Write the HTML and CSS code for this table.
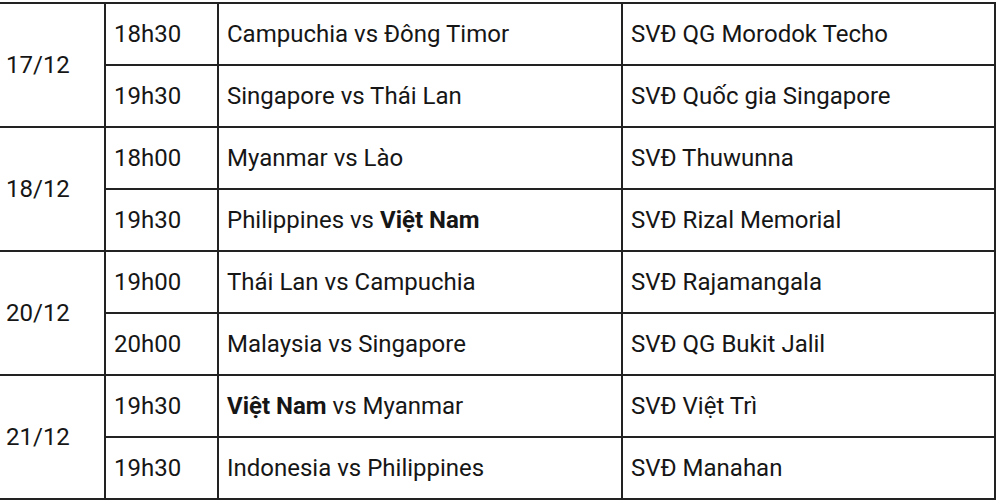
FILE: index.html
```html
<!DOCTYPE html>
<html lang="vi">
<head>
<meta charset="utf-8">
<title>Lịch thi đấu</title>
<link rel="stylesheet" href="styles.css">
</head>
<body>
<div class="schedule">
  <div class="cell date span2"><span>17/12</span></div>
  <div class="cell"><span>18h30</span></div>
  <div class="cell"><span>Campuchia vs Đông Timor</span></div>
  <div class="cell"><span>SVĐ QG Morodok Techo</span></div>
  <div class="cell"><span>19h30</span></div>
  <div class="cell"><span>Singapore vs Thái Lan</span></div>
  <div class="cell"><span>SVĐ Quốc gia Singapore</span></div>

  <div class="cell date span2"><span>18/12</span></div>
  <div class="cell"><span>18h00</span></div>
  <div class="cell"><span>Myanmar vs Lào</span></div>
  <div class="cell"><span>SVĐ Thuwunna</span></div>
  <div class="cell"><span>19h30</span></div>
  <div class="cell"><span>Philippines vs <b>Việt Nam</b></span></div>
  <div class="cell"><span>SVĐ Rizal Memorial</span></div>

  <div class="cell date span2"><span>20/12</span></div>
  <div class="cell"><span>19h00</span></div>
  <div class="cell"><span>Thái Lan vs Campuchia</span></div>
  <div class="cell"><span>SVĐ Rajamangala</span></div>
  <div class="cell"><span>20h00</span></div>
  <div class="cell"><span>Malaysia vs Singapore</span></div>
  <div class="cell"><span>SVĐ QG Bukit Jalil</span></div>

  <div class="cell date span2"><span>21/12</span></div>
  <div class="cell"><span>19h30</span></div>
  <div class="cell"><span><b>Việt Nam</b> vs Myanmar</span></div>
  <div class="cell"><span>SVĐ Việt Trì</span></div>
  <div class="cell"><span>19h30</span></div>
  <div class="cell"><span>Indonesia vs Philippines</span></div>
  <div class="cell"><span>SVĐ Manahan</span></div>
</div>
</body>
</html>
```

FILE: styles.css
```css
html, body {
  margin: 0;
  padding: 0;
  background: #ffffff;
}
body {
  overflow: hidden;
  font-family: Roboto, "Liberation Sans", sans-serif;
  font-size: 24px;
  color: #161616;
}
.schedule {
  display: grid;
  grid-template-columns: 106px 111px 402px 371px;
  grid-auto-rows: 60px;
  gap: 2px;
  padding: 2px;
  background: #222222;
  width: max-content;
  margin: 2px 0 0 -4px;
}
.cell {
  background: #ffffff;
  display: flex;
  align-items: center;
  padding: 0 8px;
  white-space: nowrap;
}
.cell b {
  font-weight: 700;
}
.span2 {
  grid-row: span 2;
}
```
